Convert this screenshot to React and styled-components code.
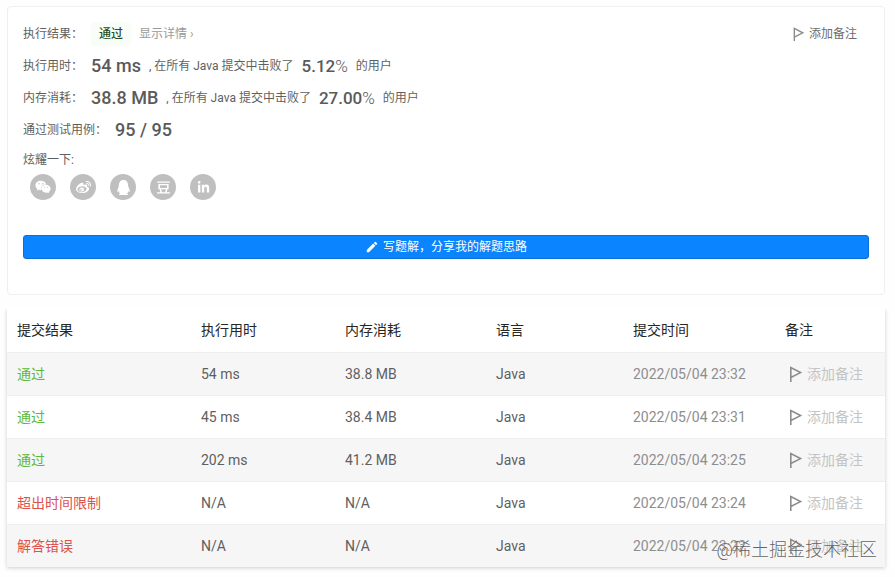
import styled, { createGlobalStyle } from "styled-components";
import { FaWeixin, FaWeibo, FaQq, FaLinkedinIn } from "react-icons/fa";
import { MdEdit } from "react-icons/md";
import { SiDouban } from "react-icons/si";

const GlobalStyle = createGlobalStyle`
  * {
    box-sizing: border-box;
  }
  body {
    margin: 0;
    background: #fefefe;
    color: #5f5f5f;
    font-family: Roboto, "Noto Sans CJK SC", sans-serif;
    font-size: 12px;
    line-height: 20px;
  }
  button {
    padding: 0;
    border: 0;
    background: none;
    color: inherit;
    font: inherit;
    cursor: pointer;
  }
`;

const Page = styled.main`
  position: relative;
  display: flex;
  flex-direction: column;
  gap: 14px;
  padding: 6px 10px 9px 7px;
`;
const ResultCard = styled.section`
  padding: 11px 15px 35px;
  border: 1px solid #efefef;
  border-radius: 4px;
  background: #fff;
`;
const ResultRow = styled.div`
  display: flex;
  align-items: center;
  height: 32px;
  white-space: pre;
`;
const Label = styled.span`
  margin-right: 8px;
`;
const Status = styled.strong`
  padding: 0 8px;
  border-radius: 4px;
  background: #f9fdf7;
  color: #294d1c;
  font-weight: 500;
  line-height: 24px;
`;
const DetailLink = styled.a`
  margin-left: 8px;
  color: #999;
  text-decoration: none;
`;
const Value = styled.span`
  margin: 0 8px;
  color: #5a5a5a;
  font-size: 18px;
  font-weight: 500;
`;
const Percent = styled(Value)`
  font-size: 17px;
  span {
    font-weight: 300;
  }
`;
const NoteButton = styled.button`
  display: flex;
  align-items: center;
  gap: 4px;
  padding-left: 2px;
  color: ${({ $muted }) => ($muted ? "#c4c4c4" : "#6c6c6c")};
  svg {
    color: #8c8c8c;
  }
`;
const RowEnd = styled.div`
  margin-left: auto;
  padding-right: 12px;
`;
const ShareTitle = styled.div`
  line-height: 28px;
`;
const ShareList = styled.div`
  display: flex;
  gap: 14px;
  padding: 0 7px;
`;
const ShareButton = styled.button`
  display: flex;
  align-items: center;
  justify-content: center;
  width: 26px;
  height: 26px;
  border-radius: 50%;
  background: #bfbfbf;
  color: #fff;
  font-size: ${({ $size }) => $size}px;
`;
const WriteButton = styled.button`
  display: flex;
  align-items: center;
  justify-content: center;
  gap: 4px;
  width: 100%;
  height: 24px;
  margin-top: 35px;
  border: 1px solid #0d6fd6;
  border-radius: 3px;
  background: #0a84ff;
  color: #fff;
`;
const Table = styled.table`
  width: 100%;
  table-layout: fixed;
  border-collapse: collapse;
  background: #fff;
  box-shadow: 0 1px 4px rgba(0, 0, 0, 0.2);
  font-size: 14px;
  clip-path: inset(0 -5px -5px -5px);
`;
const HeadCell = styled.th`
  width: ${({ $width }) => $width}px;
  height: 43px;
  padding: 0 10px;
  color: #262626;
  font-weight: 400;
  text-align: left;
`;
const BodyRow = styled.tr`
  height: 43px;
  border-top: 1px solid #efefef;
  &:nth-child(odd) {
    background: #f6f6f6;
  }
`;
const Cell = styled.td`
  padding: 0 10px;
  color: ${({ $color }) => $color || "#5f5f5f"};
  white-space: nowrap;
`;
const ResultLink = styled.a`
  color: ${({ $passed }) => ($passed ? "#5eb83a" : "#dd524c")};
  text-decoration: none;
`;
const Watermark = styled.div`
  position: absolute;
  right: 18px;
  bottom: 12px;
  color: rgba(80, 80, 80, 0.9);
  font-size: 18px;
  font-weight: 300;
  line-height: 28px;
  text-shadow: 0 0 1px #fff;
  pointer-events: none;
`;

const columns = [
  { name: "提交结果", width: 184 },
  { name: "执行用时", width: 144 },
  { name: "内存消耗", width: 151 },
  { name: "语言", width: 137 },
  { name: "提交时间", width: 152 },
  { name: "备注", width: 110 },
];

const submissions = [
  { result: "通过", passed: true, runtime: "54 ms", memory: "38.8 MB", time: "2022/05/04 23:32" },
  { result: "通过", passed: true, runtime: "45 ms", memory: "38.4 MB", time: "2022/05/04 23:31" },
  { result: "通过", passed: true, runtime: "202 ms", memory: "41.2 MB", time: "2022/05/04 23:25" },
  { result: "超出时间限制", passed: false, runtime: "N/A", memory: "N/A", time: "2022/05/04 23:24" },
  { result: "解答错误", passed: false, runtime: "N/A", memory: "N/A", time: "2022/05/04 23:22" },
];

const shareTargets = [
  { name: "微信", Icon: FaWeixin, size: 16 },
  { name: "微博", Icon: FaWeibo, size: 15 },
  { name: "QQ", Icon: FaQq, size: 15 },
  { name: "豆瓣", Icon: SiDouban, size: 13 },
  { name: "LinkedIn", Icon: FaLinkedinIn, size: 13 },
];

function FlagIcon({ size }) {
  return (
    <svg width={size} height={size} viewBox="0 0 16 16" fill="none" stroke="currentColor" strokeWidth="1.6">
      <path d="M3.8 16V1.5L13.5 6.6L3.8 11.5" />
    </svg>
  );
}

function AddNote({ muted, iconSize }) {
  return (
    <NoteButton type="button" $muted={muted}>
      <FlagIcon size={iconSize} />
      添加备注
    </NoteButton>
  );
}

function ResultSummary() {
  return (
    <ResultCard>
      <ResultRow>
        <Label>执行结果：</Label>
        <Status>通过</Status>
        <DetailLink href="#detail">显示详情 ›</DetailLink>
        <RowEnd>
          <AddNote iconSize={14} />
        </RowEnd>
      </ResultRow>
      <ResultRow>
        执行用时：
        <Value>54 ms</Value>, 在所有 Java 提交中击败了
        <Percent>
          5.12<span>%</span>
        </Percent>
        的用户
      </ResultRow>
      <ResultRow>
        内存消耗：
        <Value>38.8 MB</Value>, 在所有 Java 提交中击败了
        <Percent>
          27.00<span>%</span>
        </Percent>
        的用户
      </ResultRow>
      <ResultRow>
        通过测试用例：
        <Value>95 / 95</Value>
      </ResultRow>
      <ShareTitle>炫耀一下:</ShareTitle>
      <ShareList>
        {shareTargets.map(({ name, Icon, size }) => (
          <ShareButton key={name} type="button" aria-label={name} $size={size}>
            <Icon />
          </ShareButton>
        ))}
      </ShareList>
      <WriteButton type="button">
        <MdEdit size={14} />
        写题解，分享我的解题思路
      </WriteButton>
    </ResultCard>
  );
}

function SubmissionTable() {
  return (
    <Table>
      <thead>
        <tr>
          {columns.map(({ name, width }) => (
            <HeadCell key={name} $width={width}>
              {name}
            </HeadCell>
          ))}
        </tr>
      </thead>
      <tbody>
        {submissions.map(({ result, passed, runtime, memory, time }) => (
          <BodyRow key={time}>
            <Cell>
              <ResultLink href="#submission" $passed={passed}>
                {result}
              </ResultLink>
            </Cell>
            <Cell>{runtime}</Cell>
            <Cell>{memory}</Cell>
            <Cell>Java</Cell>
            <Cell $color="#8e8e8e">{time}</Cell>
            <Cell>
              <AddNote muted iconSize={16} />
            </Cell>
          </BodyRow>
        ))}
      </tbody>
    </Table>
  );
}

function App() {
  return (
    <>
      <GlobalStyle />
      <Page>
        <ResultSummary />
        <SubmissionTable />
        <Watermark>@稀土掘金技术社区</Watermark>
      </Page>
    </>
  );
}

export default App;
